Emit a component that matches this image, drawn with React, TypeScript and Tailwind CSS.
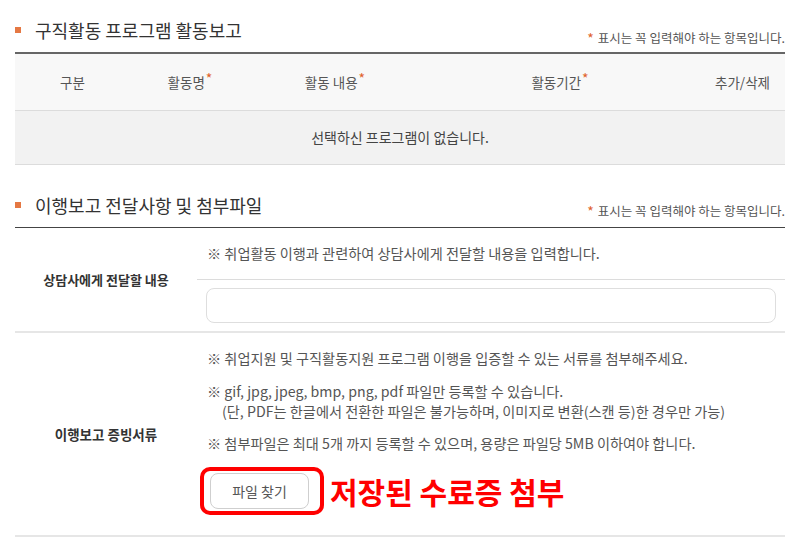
import React from 'react';

const FONT = { fontFamily: '"Noto Sans CJK KR", "Noto Sans", sans-serif' };

function Star() {
  return <span className="relative -top-[4px] ml-[1px] text-[14px] text-[#e0622b]">*</span>;
}

function SectionTitle({ title, titleTop, noteTop, height }: { title: string; titleTop: number; noteTop: number; height: number }) {
  return (
    <div className="flex justify-between" style={{ height }}>
      <div className="flex items-center h-[24px]" style={{ marginTop: titleTop }}>
        <span className="w-[6px] h-[6px] bg-[#e57843]" />
        <h2 className="ml-[14px] text-[18px] leading-[24px] text-[#333] font-normal">{title}</h2>
      </div>
      <p className="text-[12.5px] leading-[16px] text-[#555]" style={{ marginTop: noteTop }}>
        <span className="relative top-[1px] mr-[4px] text-[14px] text-[#e0622b]">*</span>
        표시는 꼭 입력해야 하는 항목입니다.
      </p>
    </div>
  );
}

const columns = [
  { label: '구분', star: false },
  { label: '활동명', star: true },
  { label: '활동 내용', star: true },
  { label: '활동기간', star: true },
  { label: '추가/삭제', star: false },
];

export default function App() {
  return (
    <div className="w-[799px] h-[545px] bg-white overflow-hidden" style={FONT}>
      <div className="ml-[15px] w-[770px]">
        <SectionTitle title="구직활동 프로그램 활동보고" titleTop={18} noteTop={29} height={52} />

        <div className="border-t-2 border-[#666]">
          <div className="grid grid-cols-[115px_120px_170px_280px_85px] h-[57px] bg-[#f8f8f8] border-b border-[#dcdcdc] text-[13.5px] text-[#555]">
            {columns.map((c) => (
              <div key={c.label} className="flex items-center justify-center">
                {c.label}
                {c.star && <Star />}
              </div>
            ))}
          </div>
          <div className="h-[54px] flex items-center justify-center bg-[#f2f2f2] border-b border-[#dcdcdc] text-[14px] text-[#444]">
            선택하신 프로그램이 없습니다.
          </div>
        </div>

        <SectionTitle title="이행보고 전달사항 및 첨부파일" titleTop={28} noteTop={37} height={62} />

        <div className="border-t-[1.5px] border-[#444]">
          <div className="grid grid-cols-[182px_1fr] border-b-2 border-[#e6e6e6]">
            <div className="flex items-center justify-center text-[13px] font-bold text-[#333]">상담사에게 전달할 내용</div>
            <div>
              <div className="h-[51px] flex items-center pl-[10px] text-[14.2px] text-[#555]">
                ※ 취업활동 이행과 관련하여 상담사에게 전달할 내용을 입력합니다.
              </div>
              <div className="border-t border-[#dcdcdc] pt-[8px] pb-[8px] px-[9px]">
                <div className="h-[35px] rounded-[8px] border border-[#dedede] bg-white" />
              </div>
            </div>
          </div>

          <div className="grid grid-cols-[182px_1fr] border-b-2 border-[#e6e6e6]">
            <div className="flex items-center justify-center text-[13.5px] font-bold text-[#333]">이행보고 증빙서류</div>
            <div className="pl-[10px] pt-[15px] pb-[20px] text-[14.2px] leading-[20px] text-[#555]">
              <p>※ 취업지원 및 구직활동지원 프로그램 이행을 입증할 수 있는 서류를 첨부해주세요.</p>
              <p className="mt-[13px]">※ gif, jpg, jpeg, bmp, png, pdf 파일만 등록할 수 있습니다.</p>
              <p className="pl-[15px]">(단, PDF는 한글에서 전환한 파일은 불가능하며, 이미지로 변환(스캔 등)한 경우만 가능)</p>
              <p className="mt-[12px]">※ 첨부파일은 최대 5개 까지 등록할 수 있으며, 용량은 파일당 5MB 이하여야 합니다.</p>
              <div className="mt-[14px] -ml-[7px] flex items-center">
                <div className="border-4 border-[#ff0000] rounded-[10px] pl-[6px] pr-[11px] py-[2px]">
                  <button className="w-[99px] h-[36px] rounded-[8px] border border-[#cfcfcf] bg-white text-[14px] text-[#555]">
                    파일 찾기
                  </button>
                </div>
                <span className="ml-[6px] text-[30px] leading-[32px] font-bold text-[#ff0000]">저장된 수료증 첨부</span>
              </div>
            </div>
          </div>
        </div>
      </div>
    </div>
  );
}
